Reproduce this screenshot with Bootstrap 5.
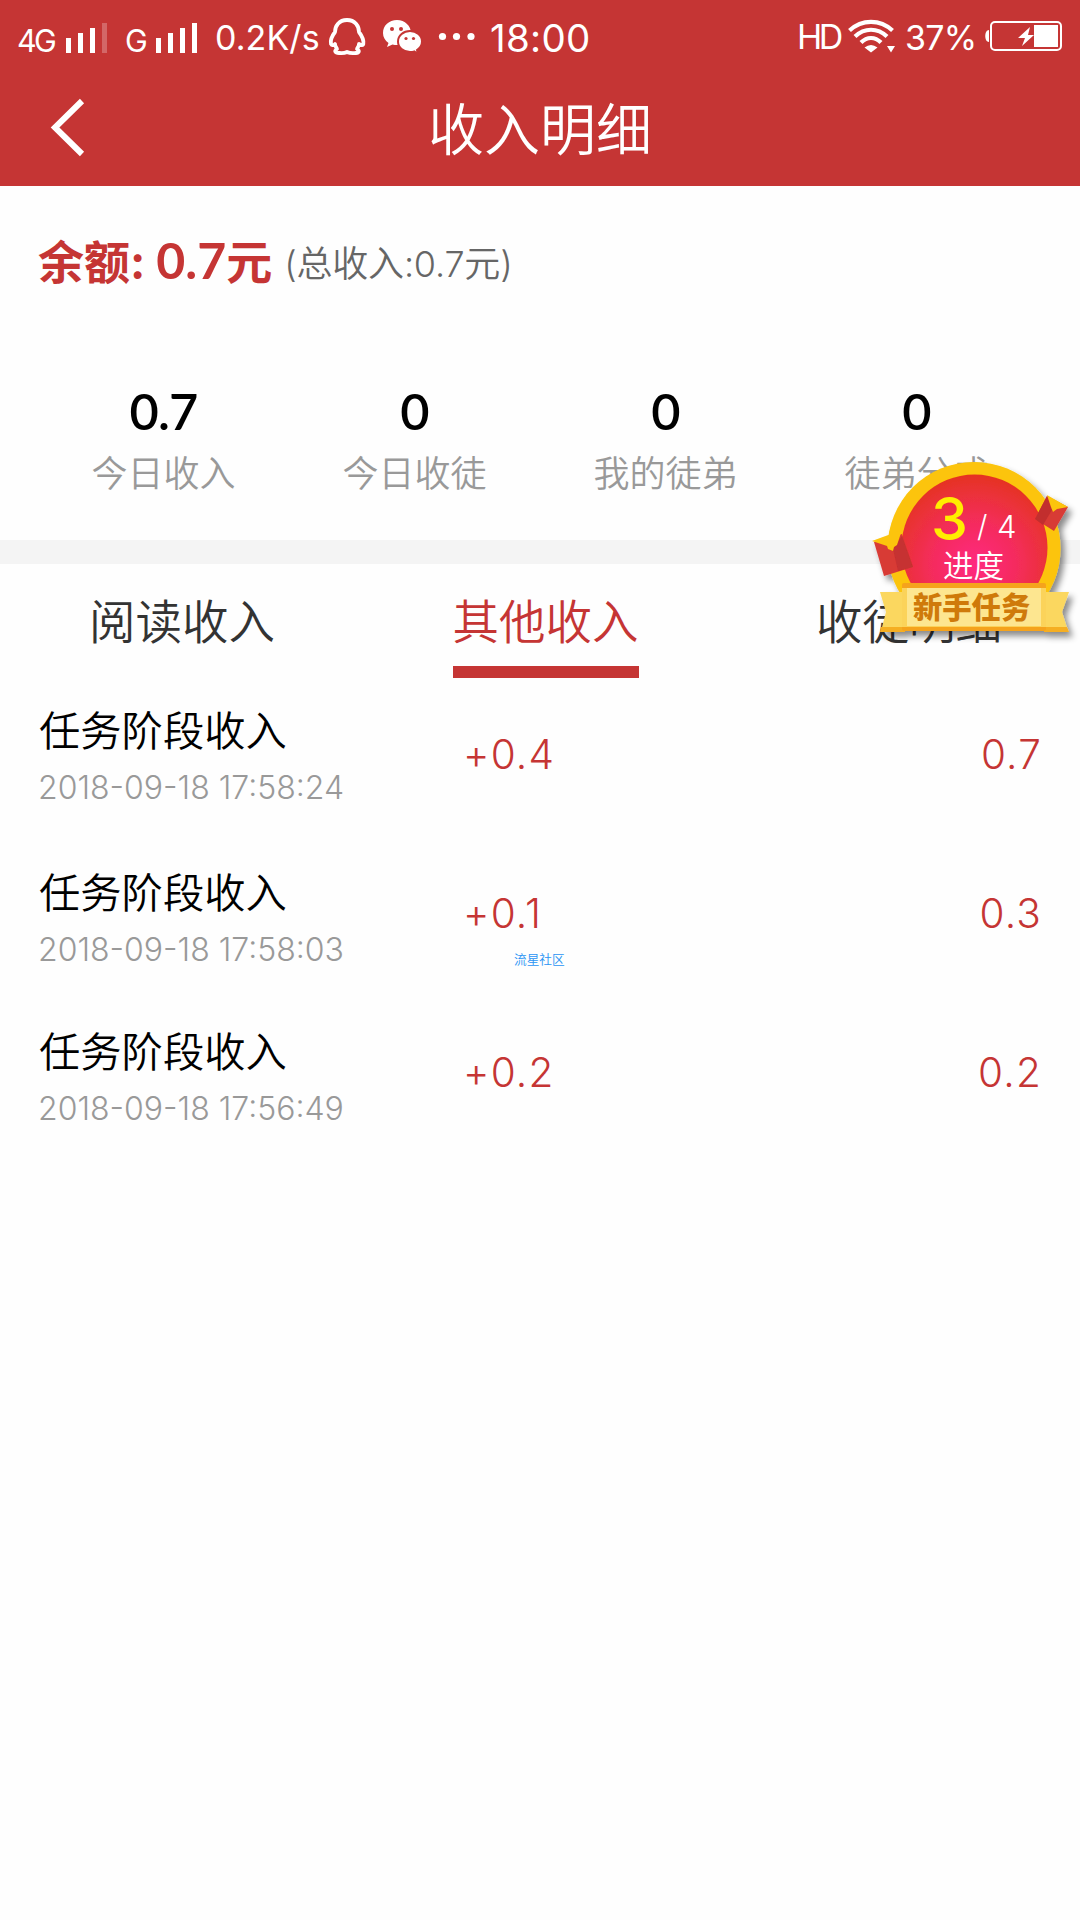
<!DOCTYPE html>
<html lang="zh-CN">
<head>
  <meta charset="UTF-8" />
  <meta name="viewport" content="width=device-width, initial-scale=1" />
  <title>收入明细</title>
  <link href="https://cdn.jsdelivr.net/npm/bootstrap@5.3.3/dist/css/bootstrap.min.css" rel="stylesheet" />
  <style>
    :root { --brand: #c53534; }
    body { font-family: Inter, "Noto Sans CJK SC", sans-serif; font-weight: 350; color: #000; background: #fefefe; overflow: hidden; }
    .app { width: 1080px; height: 1920px; }
    .brand-bg { background: var(--brand); }
    .brand-text { color: var(--brand); }

    /* status bar */
    .status { height: 72px; padding-left: 17px; font-weight: 400; white-space: nowrap; }
    .status svg, .status span { flex: none; display: block; }
    .status span { line-height: 34px; }
    .st-net { font-size: 30.5px; padding-top: 24px; letter-spacing: -2.6px; }
    .st-mid { font-size: 34px; padding-top: 21px; letter-spacing: .1px; }
    .st-time { font-size: 38.5px; padding-top: 21px; letter-spacing: .3px; }
    .w-4g { width: 49px; }
    .w-g { width: 31px; }
    .w-speed { width: 110px; }
    .w-time { width: 307px; margin-left: -1px; }
    .w-hd { width: 48px; padding-top: 20px; letter-spacing: -3.5px; }
    .w-pct { width: 78px; letter-spacing: -.8px; }

    .titlebar { height: 114px; }
    .titlebar h1 { font-size: 56px; line-height: 80px; font-weight: 350; padding-top: 2px; }
    .back { width: 110px; height: 80px; margin-top: -3px; }

    .balance { height: 156px; padding: 34px 38px 0; line-height: 80px; }
    .bal-main { font-size: 46px; font-weight: 700; }
    .bal-main span { font-family: Lato, sans-serif; font-size: 50px; }
    .bal-total { font-size: 36px; color: #666; margin-left: 12px; padding-top: 4px; letter-spacing: -.2px; }

    .stats { height: 198px; padding: 37px 38px 0; }
    .stats b { font-family: Lato, sans-serif; font-size: 50.5px; line-height: 64px; font-weight: 600; letter-spacing: -.8px; display: block; }
    .stats small { font-size: 36px; line-height: 62px; color: #999; display: block; }
    .band { height: 24px; background: #f4f4f4; }

    .tabs { height: 115px; padding: 0 78px 0 89px; font-size: 46.5px; color: #333; }
    .tabs a { color: inherit; line-height: 102px; height: 114px; padding-top: 7px; }
    .tabs a.on { color: var(--brand); border-bottom: 12px solid var(--brand); }

    .record { height: 159px; padding: 0 38px 0 40px; }
    .rec-info { width: 423px; padding-top: 25px; }
    .rec-info.first { padding-top: 22px; }
    .rec-name { font-size: 41.3px; line-height: 60px; margin-left: -1px; }
    .rec-date { font-size: 32px; line-height: 54px; color: #999; letter-spacing: 0; margin-left: -2px; }
    .rec-num { font-size: 40.5px; line-height: 152px; letter-spacing: 1.2px; }

    .site-tag { left: 514px; top: 950px; font-size: 12.7px; line-height: 20px; color: #2a94f4; }
    .task-badge { left: 860px; top: 450px; }
  </style>
</head>
<body>
<div class="app position-relative overflow-hidden">
  <header class="brand-bg text-white">
    <div class="status d-flex">
      <span class="st-net w-4g">4G</span>
      <svg width="59" height="72" fill="#fff">
        <path d="M0 38h5v15h-5zM12 33h5v20h-5zM24 28h5v25h-5z"/>
        <path d="M36 23h5v30h-5z" opacity=".25"/>
      </svg>
      <span class="st-net w-g">G</span>
      <svg width="59" height="72" fill="#fff">
        <path d="M0 38h5v15h-5zM12 33h5v20h-5zM24 28h5v25h-5zM36 23h5v30h-5z"/>
      </svg>
      <span class="st-mid w-speed">0.2K/s</span>
      <!-- QQ -->
      <svg width="56" height="72" viewBox="325 0 56 72" fill="none" stroke="#fff" stroke-width="3.8" stroke-linejoin="round">
        <path d="M347 20C339 20 335 26 335 32C332 36 330 40 331 44C332 46 334 45 335 44C335 46 336 47 337 49C334 51 335 53 339 53C343 53.500 345 53 347 52C349 53 352 53.500 356 53C359 53 360 51 357 49C358 47 359 46 359 44C361 45 363 46 363.300 44C364 40 362 36 359 32C359 26 355 20 347 20Z"/>
      </svg>
      <!-- WeChat -->
      <svg width="56" height="72" viewBox="381 0 56 72">
        <path fill="#fff" d="M397 20c-8 0-14 5.500-14 13 0 4 2 7.500 5.500 10L387 47l5.500-2.500c1.500.400 3 .500 5 .500C400 45 411 40 411 33c0-7-6-13-14-13z"/>
        <path fill="#fff" stroke="#c53534" stroke-width="2" d="M410 31c-6.500 0-12 4.500-12 10.500S403.500 52 410 52c1.500 0 3-.200 4.300-.600L418 54l-1-4c3-2 5-5 5-8.500C422 35.500 416.500 31 410 31z"/>
        <g fill="#c53534"><circle cx="392" cy="29" r="2"/><circle cx="401" cy="29" r="2"/><circle cx="406" cy="38.500" r="1.600"/><circle cx="413.500" cy="38.500" r="1.600"/></g>
      </svg>
      <svg width="54" height="72" viewBox="437 0 54 72" fill="#fff">
        <circle cx="442.500" cy="36.500" r="3.600"/><circle cx="456.500" cy="36.500" r="3.600"/><circle cx="471" cy="36.500" r="3.600"/>
      </svg>
      <span class="st-time w-time">18:00</span>
      <span class="st-mid w-hd">HD</span>
      <!-- Wi-Fi -->
      <svg width="60" height="72" viewBox="845 0 60 72" fill="none" stroke="#fff" stroke-width="4.200">
        <path d="M849.500 30.500C862 19 880 19 892.500 30.500M855 36.500C864.500 27.500 877.500 27.500 887 36.500M861 42.500C867 36.500 875 36.500 881 42.500"/>
        <path fill="#fff" stroke="none" d="M864.500 47.500Q871 42.500 877.500 47.500L871 52.500zM887 46h8l-4 6.500z"/>
      </svg>
      <span class="st-mid w-pct">37%</span>
      <!-- battery, charging -->
      <svg width="82" height="72" viewBox="983 0 82 72" fill="#fff">
        <path d="M989 30v12c-5 0-5-12 0-12z"/>
        <rect x="991" y="22" width="70" height="28" rx="4" fill="none" stroke="#fff" stroke-width="2"/>
        <path d="M1034 25h24v22h-24zM1030 27l-12 11h7l-3 8 12-11h-6z"/>
      </svg>
    </div>
    <div class="titlebar d-flex align-items-center">
      <a href="#" class="back">
        <svg width="110" height="80"><path d="M82 13L55 39.500L82 66" fill="none" stroke="#fff" stroke-width="6"/></svg>
      </a>
      <h1 class="flex-grow-1 text-center m-0">收入明细</h1>
      <div class="back"></div>
    </div>
  </header>

  <section class="balance d-flex">
    <div class="bal-main brand-text">余额: <span>0.7</span>元</div>
    <div class="bal-total">(总收入:0.7元)</div>
  </section>

  <section class="stats row g-0 text-center">
    <div class="col-3"><b>0.7</b><small>今日收入</small></div>
    <div class="col-3"><b>0</b><small>今日收徒</small></div>
    <div class="col-3"><b>0</b><small>我的徒弟</small></div>
    <div class="col-3"><b>0</b><small>徒弟分成</small></div>
  </section>
  <div class="band"></div>

  <nav class="tabs d-flex justify-content-between">
    <a href="#" class="text-decoration-none">阅读收入</a>
    <a href="#" class="text-decoration-none on">其他收入</a>
    <a href="#" class="text-decoration-none">收徒明细</a>
  </nav>

  <main>
    <div class="record d-flex">
      <div class="rec-info first"><div class="rec-name">任务阶段收入</div><div class="rec-date">2018-09-18 17:58:24</div></div>
      <div class="rec-num brand-text">+0.4</div>
      <div class="rec-num brand-text ms-auto">0.7</div>
    </div>
    <div class="record d-flex">
      <div class="rec-info"><div class="rec-name">任务阶段收入</div><div class="rec-date">2018-09-18 17:58:03</div></div>
      <div class="rec-num brand-text">+0.1</div>
      <div class="rec-num brand-text ms-auto">0.3</div>
    </div>
    <div class="record d-flex">
      <div class="rec-info"><div class="rec-name">任务阶段收入</div><div class="rec-date">2018-09-18 17:56:49</div></div>
      <div class="rec-num brand-text">+0.2</div>
      <div class="rec-num brand-text ms-auto">0.2</div>
    </div>
  </main>

  <div class="site-tag position-absolute">流星社区</div>

  <!-- floating task badge -->
  <svg class="task-badge position-absolute" width="220" height="200" viewBox="0 0 220 200">
    <defs>
      <radialGradient id="disc" cx=".5" cy=".62" r=".62">
        <stop offset="0" stop-color="#ff2a80"/><stop offset=".45" stop-color="#f52c5f"/><stop offset="1" stop-color="#e53322"/>
      </radialGradient>
      <filter id="shade" x="-10%" y="-10%" width="125%" height="125%">
        <feDropShadow dx="4" dy="5" stdDeviation="3" flood-color="#000" flood-opacity=".45"/>
      </filter>
      <clipPath id="cut"><path d="M0 0H220V150H0Z"/></clipPath>
    </defs>
    <g filter="url(#shade)">
      <g clip-path="url(#cut)">
        <circle cx="114" cy="98.500" r="86.500" fill="#fcc408"/>
        <circle cx="114.500" cy="97.500" r="73" fill="url(#disc)"/>
      </g>
      <!-- left envelope -->
      <path fill="#d83a35" d="M14 92L42 84L53 117L24 126Z"/>
      <path fill="#c63030" d="M42 86L53 117L38 121L33 99Z"/>
      <path fill="#fcc408" d="M12 91L42 80L37 95L34 97L33 101L28 99L27 96Z"/>
      <!-- right envelope -->
      <path fill="#d83a35" d="M187 46L208 57L194 81L175 69Z"/>
      <path fill="#c22e2e" d="M187 46L192 60L183 75L175 69Z"/>
      <path fill="#fcc408" d="M187 45L208 57L197 59L193 62L191 57Z"/>
      <!-- ribbon -->
      <path fill="#fbd75f" d="M20 142H45V181H21L26 162ZM209 142H184V181H208L202 162Z"/>
      <path fill="#f5ae24" d="M21 177H45V182H20ZM184 177H207L209 182H184Z"/>
      <rect x="42" y="133" width="144" height="48" rx="2" fill="#f5a31c"/>
      <rect x="42" y="138" width="144" height="39" fill="#fbd35a"/>
      <rect x="47" y="138" width="134" height="38" fill="#fde690"/>
    </g>
    <text x="71" y="90" font-size="59" font-weight="500" fill="#ffee00">3</text>
    <text x="117" y="87" font-size="30" fill="#fff">/</text>
    <text x="137" y="88" font-size="31" fill="#fff">4</text>
    <text x="83" y="127" font-size="30.500" fill="#fff">进度</text>
    <text x="53" y="168" font-size="29.300" font-weight="900" fill="#cf7a0a">新手任务</text>
  </svg>
</div>
<script src="https://cdn.jsdelivr.net/npm/bootstrap@5.3.3/dist/js/bootstrap.bundle.min.js"></script>
</body>
</html>
